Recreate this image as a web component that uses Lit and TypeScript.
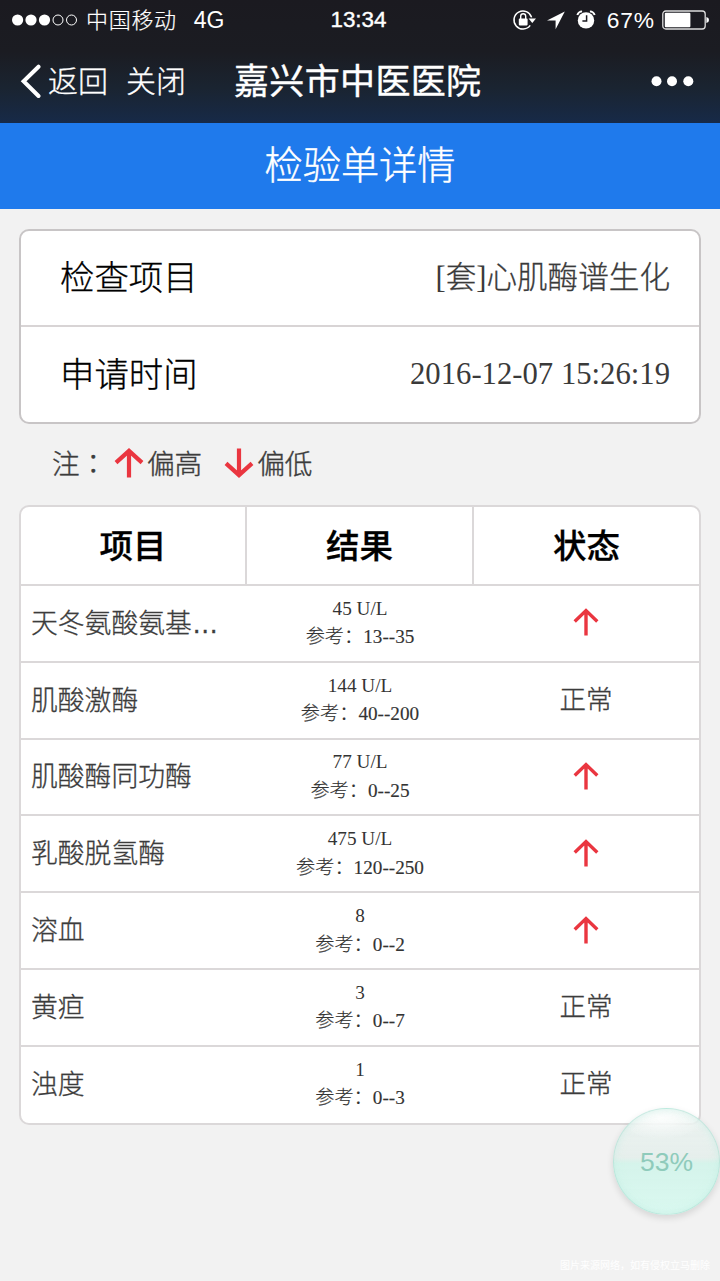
import { LitElement, html, css, svg } from "lit";
import { customElement, property } from "lit/decorators.js";

interface Item {
  name: string;
  more?: boolean;
  value: string;
  range: string;
  high: boolean;
}

const ITEMS: Item[] = [
  { name: "天冬氨酸氨基", more: true, value: "45 U/L", range: "13--35", high: true },
  { name: "肌酸激酶", value: "144 U/L", range: "40--200", high: false },
  { name: "肌酸酶同功酶", value: "77 U/L", range: "0--25", high: true },
  { name: "乳酸脱氢酶", value: "475 U/L", range: "120--250", high: true },
  { name: "溶血", value: "8", range: "0--2", high: true },
  { name: "黄疸", value: "3", range: "0--7", high: false },
  { name: "浊度", value: "1", range: "0--3", high: false },
];

@customElement("trend-arrow")
class TrendArrow extends LitElement {
  @property({ type: Boolean, reflect: true }) down = false;
  @property({ type: Boolean, reflect: true }) bold = false;

  static styles = css`
    :host { display: block; width: 26px; height: 28px; margin-top: 2px; }
    :host([bold]) { width: 30px; height: 30px; margin: -3px 0 0; }
    :host([down]) svg { transform: rotate(180deg); }
    svg { display: block; width: 100%; height: 100%; }
    path { fill: none; stroke: #ea3640; stroke-width: 3.4; }
    :host([bold]) path { stroke-width: 4.2; }
  `;

  render() {
    return this.bold
      ? html`<svg viewBox="0 0 30 30">${svg`<path d="M15 29.5V3M2 14.6L15 2.9L28 14.6" />`}</svg>`
      : html`<svg viewBox="0 0 26 28">${svg`<path d="M13 27.5V3M1.7 13.5L13 2.6L24.3 13.5" />`}</svg>`;
  }
}

@customElement("app-root")
class AppRoot extends LitElement {
  static styles = css`
    :host {
      display: block;
      position: relative;
      width: 720px;
      height: 1281px;
      overflow: hidden;
      box-sizing: border-box;
      background: #f2f2f2;
      color: #3c3c3c;
      font-family: "Noto Sans CJK SC", sans-serif;
      font-weight: 300;
    }
    * { box-sizing: border-box; }
    .top {
      height: 123px;
      color: #fff;
      background: linear-gradient(#1b1a20 0%, #1b1c22 42%, #1a2431 72%, #172a48 100%);
    }
    .status {
      height: 40px;
      display: grid;
      grid-template-columns: 1fr auto 1fr;
      align-items: center;
      padding: 0 11px 0 12px;
      font-size: 22px;
      line-height: 40px;
      white-space: nowrap;
    }
    .left, .right { display: flex; align-items: center; }
    .right { justify-content: flex-end; }
    .dots { width: 66px; height: 14px; margin-right: 8px; }
    .carrier { font-size: 22px; letter-spacing: 0.7px; height: 40px; line-height: 36px; -webkit-text-stroke: 0.2px #fff; }
    .net { font-family: "Liberation Sans", sans-serif; font-size: 23px; margin-left: 17px; font-weight: 400; }
    .clock { font-family: "Liberation Sans", sans-serif; font-size: 22.4px; font-weight: 400; -webkit-text-stroke: 0.4px #fff; padding-right: 4px; }
    .pct { font-family: "Liberation Sans", sans-serif; font-size: 22.8px; font-weight: 400; letter-spacing: 0.9px; margin: 0 7px 0 11px; }
    .sys { width: 84px; height: 26px; }
    .battery { width: 47px; height: 20px; }
    .nav { height: 83px; display: flex; align-items: center; padding: 0 26px 0 20px; }
    .back { width: 22px; height: 36px; margin-right: 6px; }
    .link { font-size: 30px; height: 83px; line-height: 79px; width: 78px; white-space: nowrap; -webkit-text-stroke: 0.3px #fff; }
    .site {
      font-size: 35px; height: 83px; line-height: 78px; font-weight: 400; margin-left: 30px;
      letter-spacing: 0.35px; flex: 1; white-space: nowrap; -webkit-text-stroke: 0.4px #fff;
    }
    .more { width: 44px; height: 12px; }
    .title {
      height: 86px;
      line-height: 79px;
      text-align: center;
      color: #fff;
      background: #1f7aec;
      font-size: 38.2px;
      -webkit-text-stroke: 0.4px #fff;
    }
    .card {
      margin: 20px 19px 0 19px;
      height: 195px;
      border: 2px solid #c8c5c6;
      border-radius: 10px;
      background: #fff;
    }
    .line {
      height: 94px;
      display: flex;
      justify-content: space-between;
      line-height: 89px;
      padding: 0 29px 0 39px;
    }
    .line + .line { height: 97px; line-height: 91px; border-top: 2px solid #d8d4d5; }
    .key { font-size: 34.4px; color: #000; -webkit-text-stroke: 0.3px #000; }
    .val { font-size: 30.6px; color: #3a3a3a; -webkit-text-stroke: 0.3px #3a3a3a; }
    .bracket, .date { font-family: "Liberation Serif", serif; font-weight: 400; -webkit-text-stroke: 0; }
    .date { font-size: 30.7px; padding-top: 2px; }
    .legend {
      height: 81px;
      display: flex;
      align-items: center;
      padding-left: 52px;
      font-size: 27.6px;
      -webkit-text-stroke: 0.4px #3c3c3c;
    }
    .note, .word { height: 81px; line-height: 76px; }
    .note { width: 62px; white-space: nowrap; }
    .colon { font-family: "Noto Sans CJK TC", sans-serif; }
    .word { margin: 0 22px 0 3px; }
    .table {
      margin: 0 19px;
      border: 2px solid #dbd8d9;
      border-radius: 10px;
      background: #fff;
      height: 620px;
      overflow: hidden;
    }
    .head, .row { display: grid; grid-template-columns: 224px 227px 1fr; }
    .head {
      height: 77px; line-height: 73px; text-align: center; font-size: 33.5px;
      font-weight: 500; color: #000; -webkit-text-stroke: 0.3px #000;
    }
    .head > div { height: 77px; }
    .head > div + div { border-left: 2px solid #dbd8d9; }
    .row { height: 76.8px; border-top: 2px solid #dbd8d9; align-items: center; }
    .name {
      padding: 0 0 3px 10px;
      font-size: 26.8px;
      line-height: 40px;
      height: 43px;
      white-space: nowrap;
      -webkit-text-stroke: 0.3px #3c3c3c;
    }
    .ellipsis { font-family: "Liberation Sans", sans-serif; font-weight: 400; line-height: 1; }
    .result {
      padding-left: 3px;
      font-family: "Liberation Serif", "Noto Sans CJK SC", serif;
      font-size: 19.2px;
      line-height: 28.6px;
      text-align: center;
      color: #333;
    }
    .ref { -webkit-text-stroke: 0.15px #333; }
    .state {
      display: flex;
      justify-content: center;
      padding: 0 0 4px 1px;
      font-size: 26.5px;
      line-height: 40px;
      -webkit-text-stroke: 0.3px #3c3c3c;
    }
    .bubble {
      position: absolute;
      left: 613px;
      top: 1108px;
      width: 107px;
      height: 107px;
      border-radius: 50%;
      border: 1.5px solid rgba(160, 220, 205, 0.5);
      background:
        radial-gradient(ellipse 46% 20% at 45% 8%, rgba(255, 255, 255, 0.85), rgba(255, 255, 255, 0) 100%),
        linear-gradient(rgba(232, 242, 239, 0.7) 0%, rgba(228, 238, 235, 0.85) 46%, rgba(211, 243, 234, 0.95) 52%, rgba(216, 248, 239, 0.97) 100%);
      box-shadow: 0 3px 7px rgba(0, 0, 0, 0.12), inset 0 0 8px rgba(190, 235, 223, 0.55);
      color: #8fcbbb;
      font: 400 26.5px/107px "Liberation Sans", sans-serif;
      text-align: center;
    }
    .mark {
      position: absolute;
      right: 10px;
      bottom: 8px;
      font-size: 10px;
      line-height: 16px;
      color: #fff;
      font-weight: 400;
      white-space: nowrap;
    }
  `;

  render() {
    return html`
      <div class="top">
        <div class="status">
          <div class="left">
            <svg class="dots" viewBox="0 0 66 14">
              <g fill="#fff"><circle cx="5.6" cy="7" r="5.6" /><circle cx="19" cy="7" r="5.6" /><circle cx="32.5" cy="7" r="5.6" /></g>
              <g fill="none" stroke="#fff"><circle cx="46" cy="7" r="5" /><circle cx="59.5" cy="7" r="5" /></g>
            </svg>
            <span class="carrier">中国移动</span><span class="net">4G</span>
          </div>
          <div class="clock">13:34</div>
          <div class="right">
            <svg class="sys" viewBox="0 0 84 26">
              <path d="M19.6 10.4A9 9 0 1 0 18.2 18.4" fill="none" stroke="#fff" stroke-width="1.5" />
              <path d="M16.6 11.6h7.4l-3.7 4.4z" fill="#fff" />
              <rect x="6.8" y="11.6" width="8.8" height="6.8" rx="0.8" fill="#fff" />
              <path d="M8.7 12V9.2a2.5 2.5 0 0 1 5 0V12" fill="none" stroke="#fff" stroke-width="1.4" />
              <path d="M52.8 4.6L35 13.4h8.6v8.8z" fill="#fff" />
              <circle cx="74" cy="13.4" r="8.2" fill="#fff" />
              <path d="M74.6 8.2V14H70.4" fill="none" stroke="#1b1a20" stroke-width="1.5" />
              <path d="M65.3 8a5.4 5.4 0 0 1 4.8-3.6M82.7 8a5.4 5.4 0 0 0-4.8-3.6" fill="none" stroke="#fff" stroke-width="1.9" />
            </svg>
            <span class="pct">67%</span>
            <svg class="battery" viewBox="0 0 47 20">
              <rect x="0.8" y="1" width="42.4" height="18" rx="3" fill="none" stroke="#ddd" stroke-width="1.3" />
              <rect x="2.8" y="2.8" width="25.6" height="14.4" rx="1" fill="#fff" />
              <path d="M44.4 7q2.6 0.4 2.6 3t-2.6 3z" fill="#fff" />
            </svg>
          </div>
        </div>
        <div class="nav">
          <svg class="back" viewBox="0 0 22 36"><path d="M18.5 2.7L3.6 17.2L18.5 32" fill="none" stroke="#fff" stroke-width="4" stroke-linecap="round" /></svg>
          <span class="link">返回</span><span class="link">关闭</span>
          <span class="site">嘉兴市中医医院</span>
          <svg class="more" viewBox="0 0 44 12"><g fill="#fff"><circle cx="6.5" cy="5.3" r="5" /><circle cx="22" cy="5.3" r="5" /><circle cx="38.3" cy="5.3" r="5" /></g></svg>
        </div>
      </div>
      <div class="title">检验单详情</div>
      <div class="card">
        <div class="line"><span class="key">检查项目</span><span class="val"><span class="bracket">[</span>套<span class="bracket">]</span>心肌酶谱生化</span></div>
        <div class="line"><span class="key">申请时间</span><span class="val date">2016-12-07 15:26:19</span></div>
      </div>
      <div class="legend">
        <span class="note">注<span class="colon" lang="zh-TW">：</span></span>
        <trend-arrow bold></trend-arrow><span class="word">偏高</span>
        <trend-arrow bold down></trend-arrow><span class="word">偏低</span>
      </div>
      <div class="table">
        <div class="head"><div>项目</div><div>结果</div><div>状态</div></div>
        ${ITEMS.map((item) => html`
          <div class="row">
            <div class="name">${item.name}${item.more ? html`<span class="ellipsis">…</span>` : ""}</div>
            <div class="result"><div>${item.value}</div><div class="ref">参考：${item.range}</div></div>
            <div class="state">${item.high ? html`<trend-arrow></trend-arrow>` : "正常"}</div>
          </div>`)}
      </div>
      <div class="bubble">53%</div>
      <div class="mark">图片来源网络，如有侵权立马删除</div>
    `;
  }
}
